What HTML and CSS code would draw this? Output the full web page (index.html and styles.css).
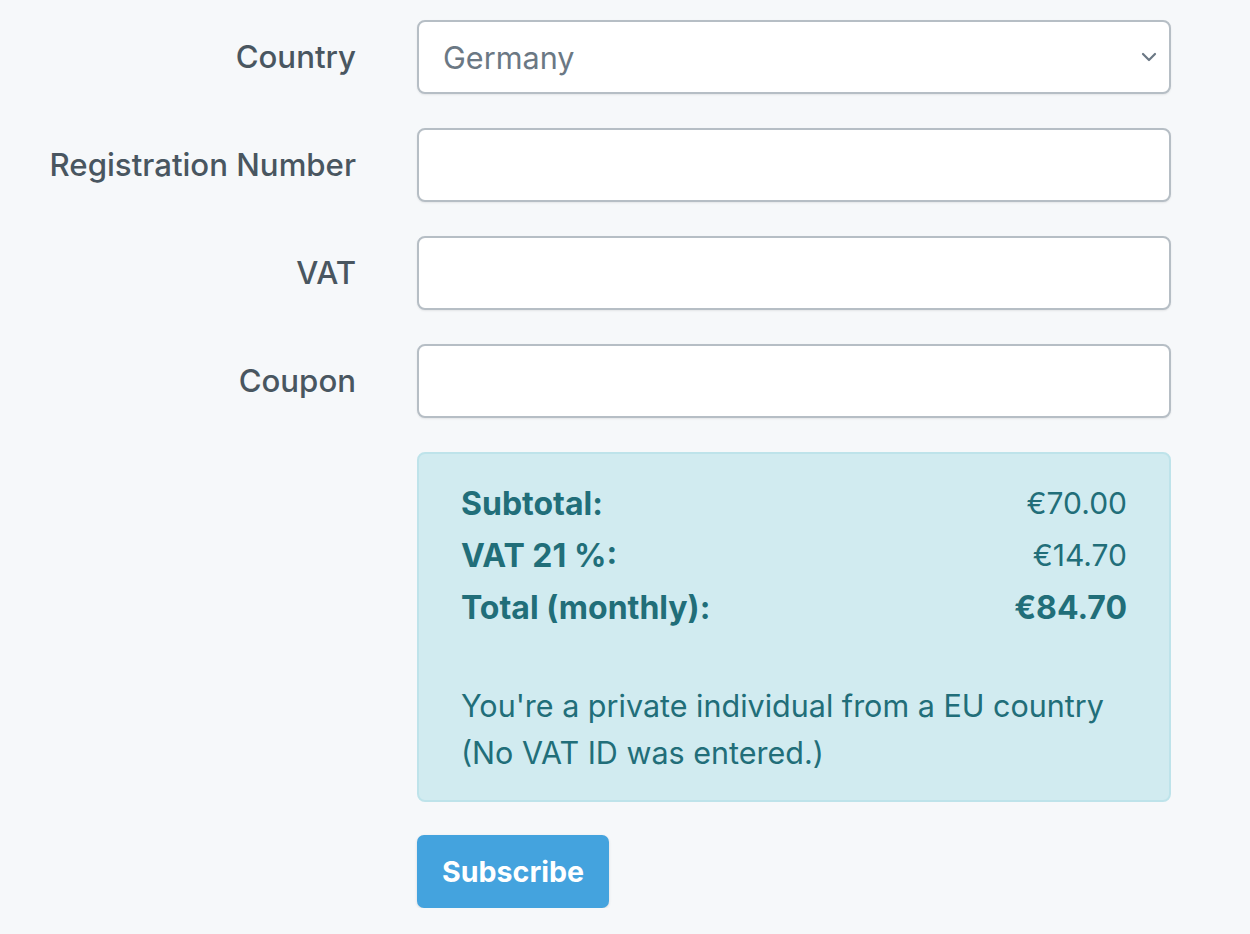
FILE: index.html
```html
<!DOCTYPE html>
<html>
<head>
<meta charset="utf-8">
<link rel="stylesheet" href="styles.css">
</head>
<body>
<form class="form">
  <div class="row">
    <label class="label">Country</label>
    <div class="field select">
      <span class="value">Germany</span>
      <svg class="chev" width="16" height="10" viewBox="0 0 16 10"><path d="M2 2 L8 8 L14 2" fill="none" stroke="#6b7885" stroke-width="2.2" stroke-linecap="round" stroke-linejoin="round"/></svg>
    </div>
  </div>
  <div class="row">
    <label class="label">Registration Number</label>
    <div class="field"></div>
  </div>
  <div class="row">
    <label class="label">VAT</label>
    <div class="field"></div>
  </div>
  <div class="row">
    <label class="label">Coupon</label>
    <div class="field"></div>
  </div>
  <div class="row">
    <div></div>
    <div class="alert">
      <div class="line"><b>Subtotal:</b><span>€70.00</span></div>
      <div class="line"><b>VAT 21 %:</b><span>€14.70</span></div>
      <div class="line"><b>Total (monthly):</b><b>€84.70</b></div>
      <p class="note">You're a private individual from a EU country<br>(No VAT ID was entered.)</p>
    </div>
  </div>
  <div class="row">
    <div></div>
    <div><button type="button" class="btn">Subscribe</button></div>
  </div>
</form>
</body>
</html>
```
FILE: styles.css
```css
html, body {
  margin: 0;
  background: #f6f8fa;
  font-family: Inter, "Noto Sans", sans-serif;
}
.form {
  display: flex;
  flex-direction: column;
  gap: 34px;
  padding: 20px 80px 0 0;
}
.row {
  display: grid;
  grid-template-columns: 356px 754px;
  column-gap: 61px;
  align-items: center;
}
.label {
  text-align: right;
  font-size: 31.2px;
  font-weight: 500;
  color: #495660;
  white-space: nowrap;
}
.field {
  box-sizing: border-box;
  height: 74px;
  background: #fff;
  border: 2px solid #b6bec5;
  border-radius: 8px;
  box-shadow: 0 1px 2px rgba(0,0,0,0.08);
  display: flex;
  align-items: center;
  padding: 0 24px;
}
.select { justify-content: space-between; padding-right: 12px; }
.value { font-size: 30.6px; color: #6b7884; }
.alert {
  box-sizing: border-box;
  height: 350px;
  background: #d1ebf0;
  border: 2px solid #bee3ea;
  border-radius: 8px;
  padding: 23px 42px 0 42px;
  color: #216e79;
  font-size: 30.5px;
}
.line {
  display: flex;
  justify-content: space-between;
  height: 52px;
  align-items: center;
  font-size: 32px;
}
.line b { font-weight: 700; }
.line span { font-weight: 400; font-size: 30px; }
.note {
  margin: 49px 0 0 0;
  line-height: 47px;
}
.btn {
  margin-top: -1px;
  height: 73px;
  padding: 0 25px;
  border: none;
  border-radius: 7px;
  background: #44a3de;
  color: #fff;
  font-family: Inter, "Noto Sans", sans-serif;
  font-size: 28.6px;
  font-weight: 700;
  box-shadow: 0 1px 3px rgba(0,0,0,0.12);
}
```
